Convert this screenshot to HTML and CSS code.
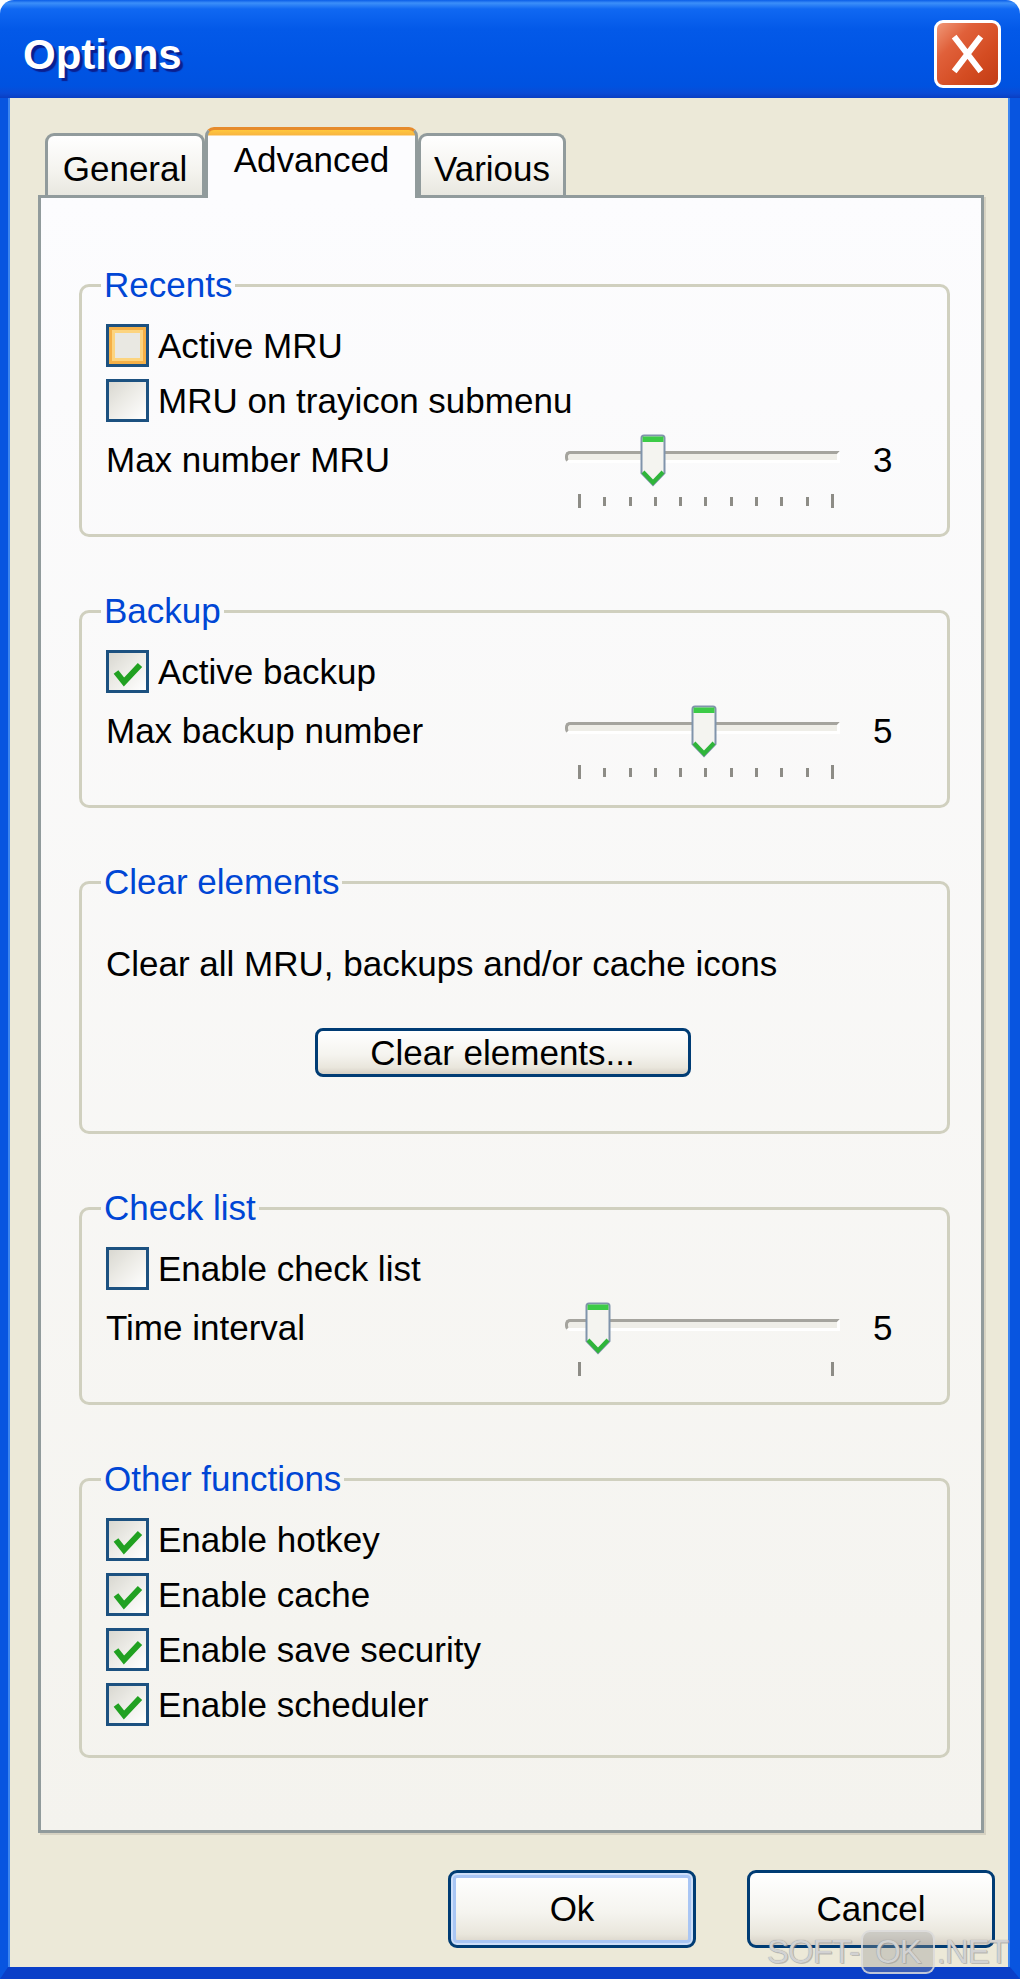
FILE: index.html
```html
<!DOCTYPE html>
<html lang="en">
  <head>
    <meta charset="UTF-8" />
    <link rel="stylesheet" href="styles.css">
  </head>
  <body>
    <div class="window">
      <div class="titlebar">
        <span class="title">Options</span>
        <span class="close">
          <svg width="61" height="62" viewBox="0 0 61 62">
            <path d="M19 16 L42 46 M42 16 L19 46" stroke="#fff" stroke-width="6" stroke-linecap="square" fill="none" />
          </svg>
        </span>
      </div>

      <div class="frame">
        <div class="tabs">
          <div class="tab tab-general">General</div>
          <div class="tab tab-advanced active">Advanced</div>
          <div class="tab tab-various">Various</div>
        </div>

        <div class="page">
          <!-- Recents -->
          <fieldset class="group">
            <legend>Recents</legend>
            <div class="opt"><span class="check hot"></span>Active MRU</div>
            <div class="opt"><span class="check"></span>MRU on trayicon submenu</div>
            <div class="slider-row">
              <span class="slider-label">Max number MRU</span>
              <div class="slider">
                <div class="track"></div>
                <div class="ticks">
                  <span class="tick end"></span><span class="tick"></span><span class="tick"></span>
                  <span class="tick"></span><span class="tick"></span><span class="tick"></span>
                  <span class="tick"></span><span class="tick"></span><span class="tick"></span>
                  <span class="tick"></span><span class="tick end"></span>
                </div>
                <svg class="thumb" style="left: 80px" width="26" height="54" viewBox="0 0 26 54">
                  <path d="M4 1.5 H22 Q24.5 1.5 24.5 4 V39 L13 51 L1.5 39 V4 Q1.5 1.5 4 1.5 Z" fill="#f4f4f0" stroke="#8094ab" stroke-width="2" />
                  <path d="M3 2.5 H23 Q23.5 2.5 23.5 4 V8 H2.5 V4 Q2.5 2.5 3 2.5 Z" fill="#3ccb47" />
                  <path d="M3 38 L13 48.5 L23 38" fill="none" stroke="#2fb53a" stroke-width="4" />
                </svg>
              </div>
              <span class="slider-value">3</span>
            </div>
          </fieldset>

          <!-- Backup -->
          <fieldset class="group">
            <legend>Backup</legend>
            <div class="opt">
              <span class="check">
                <svg width="37" height="37" viewBox="0 0 37 37"><path d="M7 19 L15 29 L31 12" fill="none" stroke="#21a121" stroke-width="6" /></svg>
              </span>Active backup
            </div>
            <div class="slider-row">
              <span class="slider-label">Max backup number</span>
              <div class="slider">
                <div class="track"></div>
                <div class="ticks">
                  <span class="tick end"></span><span class="tick"></span><span class="tick"></span>
                  <span class="tick"></span><span class="tick"></span><span class="tick"></span>
                  <span class="tick"></span><span class="tick"></span><span class="tick"></span>
                  <span class="tick"></span><span class="tick end"></span>
                </div>
                <svg class="thumb" style="left: 131px" width="26" height="54" viewBox="0 0 26 54">
                  <path d="M4 1.5 H22 Q24.5 1.5 24.5 4 V39 L13 51 L1.5 39 V4 Q1.5 1.5 4 1.5 Z" fill="#f4f4f0" stroke="#8094ab" stroke-width="2" />
                  <path d="M3 2.5 H23 Q23.5 2.5 23.5 4 V8 H2.5 V4 Q2.5 2.5 3 2.5 Z" fill="#3ccb47" />
                  <path d="M3 38 L13 48.5 L23 38" fill="none" stroke="#2fb53a" stroke-width="4" />
                </svg>
              </div>
              <span class="slider-value">5</span>
            </div>
          </fieldset>

          <!-- Clear elements -->
          <fieldset class="group clear">
            <legend>Clear elements</legend>
            <p class="note">Clear all MRU, backups and/or cache icons</p>
            <div class="center">
              <button class="btn btn-clear">Clear elements...</button>
            </div>
          </fieldset>

          <!-- Check list -->
          <fieldset class="group">
            <legend>Check list</legend>
            <div class="opt"><span class="check"></span>Enable check list</div>
            <div class="slider-row">
              <span class="slider-label">Time interval</span>
              <div class="slider">
                <div class="track"></div>
                <div class="ticks">
                  <span class="tick end"></span><span class="tick end"></span>
                </div>
                <svg class="thumb" style="left: 25px" width="26" height="54" viewBox="0 0 26 54">
                  <path d="M4 1.5 H22 Q24.5 1.5 24.5 4 V39 L13 51 L1.5 39 V4 Q1.5 1.5 4 1.5 Z" fill="#f4f4f0" stroke="#8094ab" stroke-width="2" />
                  <path d="M3 2.5 H23 Q23.5 2.5 23.5 4 V8 H2.5 V4 Q2.5 2.5 3 2.5 Z" fill="#3ccb47" />
                  <path d="M3 38 L13 48.5 L23 38" fill="none" stroke="#2fb53a" stroke-width="4" />
                </svg>
              </div>
              <span class="slider-value">5</span>
            </div>
          </fieldset>

          <!-- Other functions -->
          <fieldset class="group last">
            <legend>Other functions</legend>
            <div class="opt">
              <span class="check">
                <svg width="37" height="37" viewBox="0 0 37 37"><path d="M7 19 L15 29 L31 12" fill="none" stroke="#21a121" stroke-width="6" /></svg>
              </span>Enable hotkey
            </div>
            <div class="opt">
              <span class="check">
                <svg width="37" height="37" viewBox="0 0 37 37"><path d="M7 19 L15 29 L31 12" fill="none" stroke="#21a121" stroke-width="6" /></svg>
              </span>Enable cache
            </div>
            <div class="opt">
              <span class="check">
                <svg width="37" height="37" viewBox="0 0 37 37"><path d="M7 19 L15 29 L31 12" fill="none" stroke="#21a121" stroke-width="6" /></svg>
              </span>Enable save security
            </div>
            <div class="opt">
              <span class="check">
                <svg width="37" height="37" viewBox="0 0 37 37"><path d="M7 19 L15 29 L31 12" fill="none" stroke="#21a121" stroke-width="6" /></svg>
              </span>Enable scheduler
            </div>
          </fieldset>
        </div>

        <div class="buttons">
          <button class="btn btn-default">Ok</button>
          <button class="btn">Cancel</button>
        </div>
      </div>

      <div class="watermark">SOFT-<span class="wm-ok">OK</span>.NET</div>
    </div>
  </body>
</html>
```

FILE: styles.css
```css
body {
  margin: 0;
  background: #fff;
  font-family: "Liberation Sans", Arial, sans-serif;
  font-size: 35px;
  color: #000;
}

.window {
  position: relative;
  width: 1020px;
  height: 1979px;
  display: flex;
  flex-direction: column;
  overflow: hidden;
}

/* Title bar */
.titlebar {
  height: 98px;
  flex: none;
  display: flex;
  justify-content: space-between;
  align-items: flex-start;
  padding: 0 19px 0 23px;
  box-sizing: border-box;
  border-radius: 14px 14px 0 0;
  background: linear-gradient(
    #0a5de8 0,
    #3c8ff9 3px,
    #1068f2 9px,
    #0359e8 30%,
    #0055e5 60%,
    #0052e0 88%,
    #0a4bd6 95%,
    #0a3ec2 100%
  );
}

.title {
  padding-top: 31px;
  font-size: 42px;
  font-weight: bold;
  line-height: 47px;
  color: #fff;
  text-shadow: 3px 3px 1px #0a1f8f;
}

.close {
  margin-top: 20px;
  width: 67px;
  height: 68px;
  box-sizing: border-box;
  border: 3px solid #fff;
  border-radius: 9px;
  background: linear-gradient(135deg, #f09878 0%, #e0603a 30%, #d44c22 65%, #c23c14 100%);
  display: flex;
  align-items: center;
  justify-content: center;
}

/* Window frame */
.frame {
  flex: 1;
  display: flex;
  flex-direction: column;
  background: #ece9d8;
  border-left: 8px solid #0855e0;
  border-right: 10px solid #0855e0;
  border-bottom: 12px solid #0a3fc8;
  padding: 29px 15px 19px 30px;
  box-shadow: inset 2px 0 0 #3d86f0, inset -2px 0 0 #3d86f0;
}

/* Tabs */
.tabs {
  position: relative;
  z-index: 1;
  display: flex;
  align-items: flex-end;
  height: 71px;
  margin-bottom: -3px;
  padding-left: 7px;
}

.tab {
  height: 62px;
  margin-bottom: 3px;
  box-sizing: border-box;
  padding-top: 15px;
  line-height: 36px;
  text-align: center;
  border: 3px solid #919b9c;
  border-bottom: none;
  border-radius: 9px 9px 0 0;
  background: linear-gradient(#ffffff, #f4f3ee 60%, #e8e7e0);
}

.tab-general {
  width: 160px;
}

.tab-advanced {
  width: 213px;
}

.tab-various {
  width: 148px;
}

.tab.active {
  height: 71px;
  margin-bottom: 0;
  padding-top: 12px;
  border-top: 3px solid #e68b2c;
  background: linear-gradient(#ffc73c 0, #f8b542 5px, #fcfcfe 6px);
}

.page {
  height: 1638px;
  margin-right: 11px;
  box-sizing: border-box;
  border: 3px solid #919b9c;
  padding: 69px 31px 0 38px;
  background: linear-gradient(#fcfcfe, #f4f3ee);
  box-shadow: 2px 2px 0 #d6d2c2;
}

/* Group boxes */
.group {
  margin: 0 0 56px;
  padding: 15px 31px 23px 24px;
  min-inline-size: 0;
  border: 3px solid #d0d0bf;
  border-radius: 10px;
}

.group.last {
  margin-top: 1px;
  margin-bottom: 0;
}

.group.clear {
  padding-bottom: 54px;
}

legend {
  padding: 0 3px;
  margin-left: -5px;
  line-height: 36px;
  color: #0046d5;
}

.opt {
  display: flex;
  align-items: center;
  gap: 9px;
  height: 55px;
  line-height: 36px;
  white-space: nowrap;
}

.check {
  width: 43px;
  height: 43px;
  flex: none;
  box-sizing: border-box;
  border: 3px solid #1c5180;
  background: linear-gradient(135deg, #d9d8d1 0%, #ecebe6 45%, #ffffff 100%);
}

.check svg {
  display: block;
}

.check.hot {
  box-shadow: inset 0 0 0 3px #f5b047, inset 0 0 0 6px #fcd47f;
  background: #e9e8e2;
}

/* Sliders */
.slider-row {
  display: grid;
  grid-template-columns: 454px 285px auto;
  margin-top: 3px;
  line-height: 36px;
}

.slider-label,
.slider-value {
  margin-top: 11px;
  white-space: nowrap;
}

.slider-value {
  margin-left: 28px;
}

.slider {
  position: relative;
  height: 80px;
}

.track {
  margin: 20px 0 0 5px;
  width: 275px;
  height: 12px;
  box-sizing: border-box;
  border: 3px solid;
  border-color: #a5a49e #ffffff #ffffff #a5a49e;
  border-radius: 5px 0 0 5px;
  background: #efeee8;
}

.ticks {
  display: flex;
  justify-content: space-between;
  align-items: center;
  width: 256px;
  height: 14px;
  margin: 31px 0 0 18px;
}

.tick {
  width: 3px;
  height: 9px;
  background: #8d8c86;
}

.tick.end {
  height: 14px;
}

.thumb {
  position: absolute;
  top: 3px;
}

/* Clear elements */
.note {
  margin: 31px 0 0;
  line-height: 36px;
  white-space: nowrap;
}

.center {
  display: flex;
  justify-content: center;
  margin-top: 46px;
}

/* Buttons */
.btn {
  width: 248px;
  height: 78px;
  box-sizing: border-box;
  padding: 0;
  font-family: inherit;
  font-size: 35px;
  color: #000;
  border: 3px solid #003c74;
  border-radius: 9px;
  background: linear-gradient(#ffffff, #f5f4ef 55%, #e9e6dc 85%, #d6d0c5);
}

.btn-clear {
  width: 376px;
  height: 49px;
  border-radius: 8px;
  line-height: 40px;
  margin-right: 17px;
}

.btn-default {
  box-shadow: inset 0 0 0 2px #cedff9, inset 0 0 0 5px #a9c6f4;
}

.buttons {
  display: flex;
  justify-content: flex-end;
  gap: 51px;
  margin-top: 37px;
}

/* Watermark */
.watermark {
  position: absolute;
  right: 12px;
  bottom: 5px;
  font-size: 33px;
  line-height: 40px;
  letter-spacing: -1px;
  color: #d2d2d2;
  text-shadow: 0 0 1px #8a8a8a, 1px 1px 0 rgba(150, 150, 150, 0.5);
}

.wm-ok {
  display: inline-block;
  margin: 0 2px;
  padding: 0 12px;
  border: 2px solid rgba(225, 225, 225, 0.8);
  border-radius: 9px;
  background: rgba(150, 150, 150, 0.35);
}
```
